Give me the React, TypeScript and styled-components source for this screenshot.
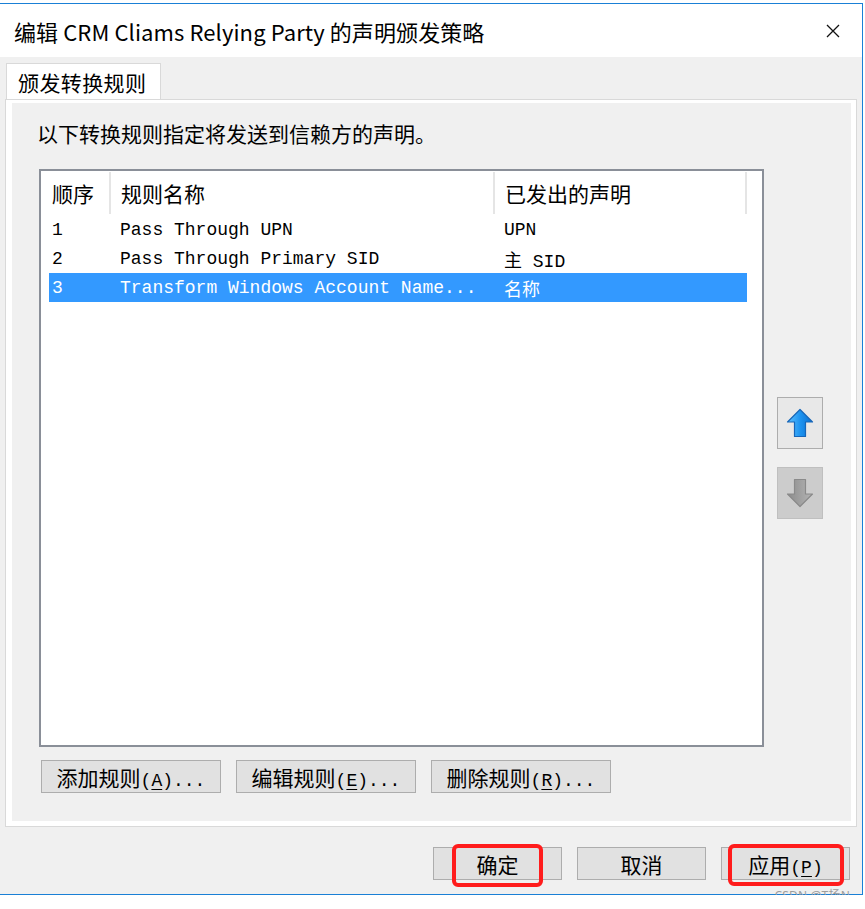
import React from 'react';
import styled, { createGlobalStyle } from 'styled-components';

const GlobalStyle = createGlobalStyle`
  html, body {
    margin: 0;
    padding: 0;
    background: #ffffff;
  }
  body {
    font-family: 'Noto Sans CJK SC', 'Noto Sans', sans-serif;
    color: #000;
  }
`;

const cjk = `'Noto Sans CJK SC', 'Noto Sans', sans-serif`;
const mono = `'Liberation Mono', 'Noto Sans CJK SC', monospace`;

// rules shown in the list
const rules = [
  { order: '1', name: 'Pass Through UPN', claim: 'UPN' },
  { order: '2', name: 'Pass Through Primary SID', claim: '主 SID' },
  { order: '3', name: 'Transform Windows Account Name...', claim: '名称' },
];

const Frame = styled.div`
  position: relative;
  margin-top: 3px;
  width: 862px;
  border-top: 1px solid #1a80d6;
  border-right: 1px solid #1a80d6;
  border-bottom: 1px solid #1a80d6;
`;

const TitleBar = styled.div`
  height: 53px;
  background: #ffffff;
  display: flex;
  align-items: center;
  justify-content: space-between;
  padding: 0 22px 0 14px;
`;

const Title = styled.div`
  font-family: ${cjk};
  font-size: 22px;
  letter-spacing: 0.1px;
`;

const Body = styled.div`
  background: #f0f0f0;
  padding: 6px 5px 0 5px;
`;

const TabStrip = styled.div`
  display: flex;
  padding-left: 1px;
`;

const Tab = styled.div`
  width: 155px;
  height: 36px;
  box-sizing: border-box;
  border: 1px solid #d9d9d9;
  border-bottom: none;
  background: #ffffff;
  font-family: ${cjk};
  font-size: 21px;
  letter-spacing: 0.4px;
  display: flex;
  align-items: center;
  padding-left: 11px;
`;

const TabPanel = styled.div`
  border: 1px solid #d9d9d9;
  background: #ffffff;
  padding: 3px 5px 5px 6px;
`;

const PanelInner = styled.div`
  background: #f0f0f0;
  padding: 15px 0 28px 0;
`;

const Description = styled.div`
  font-family: ${cjk};
  font-size: 21px;
  line-height: 30px;
  padding-left: 25px;
`;

const ListArea = styled.div`
  display: flex;
  align-items: flex-start;
  margin: 21px 0 0 27px;
  gap: 13px;
`;

const ListBox = styled.div`
  width: 713px;
  height: 574px;
  border: 2px solid #8a8f98;
  background: #ffffff;
  padding-left: 8px;
`;

const Row = styled.div<{ selected?: boolean }>`
  display: grid;
  grid-template-columns: 60px 384px 254px;
  width: 698px;
  height: 29px;
  align-items: center;
  background: ${({ selected }) => (selected ? '#3399ff' : 'transparent')};
  color: ${({ selected }) => (selected ? '#ffffff' : '#000000')};
  font-family: ${mono};
  font-size: 18px;
  white-space: nowrap;
`;

const HeaderRow = styled.div`
  display: grid;
  grid-template-columns: 60px 384px 254px;
  width: 700px;
  height: 44px;
  font-family: ${cjk};
  font-size: 21px;
`;

const HeaderCell = styled.div<{ first?: boolean; last?: boolean }>`
  display: flex;
  align-items: center;
  padding-left: ${({ first }) => (first ? '3px' : '10px')};
  margin: 1px 0;
  border-left: ${({ first }) => (first ? 'none' : '2px solid #e5e5e5')};
  border-right: ${({ last }) => (last ? '2px solid #e5e5e5' : 'none')};
`;

const Cell = styled.div<{ first?: boolean }>`
  padding-left: ${({ first }) => (first ? '3px' : '11px')};
  overflow: hidden;
`;

const OrderButtons = styled.div`
  display: flex;
  flex-direction: column;
  gap: 18px;
  margin-top: 228px;
`;

const OrderButton = styled.div<{ disabled?: boolean }>`
  width: 44px;
  height: 50px;
  border: 1px solid ${({ disabled }) => (disabled ? '#bfbfbf' : '#adadad')};
  background: ${({ disabled }) => (disabled ? '#cccccc' : '#e8e8e8')};
  display: flex;
  align-items: center;
  justify-content: center;
`;

const RuleButtons = styled.div`
  display: flex;
  gap: 15px;
  margin: 13px 0 0 29px;
`;

const Button = styled.div<{ width: number }>`
  position: relative;
  width: ${({ width }) => width}px;
  height: 33px;
  box-sizing: border-box;
  border: 1px solid #adadad;
  background: #e1e1e1;
  font-family: ${cjk};
  font-size: 21px;
  display: flex;
  align-items: center;
  justify-content: center;
  white-space: nowrap;
`;

const Mnemonic = styled.span`
  font-family: ${mono};
  font-size: 18px;
  u {
    text-underline-offset: 3px;
  }
`;

const Footer = styled.div`
  display: flex;
  justify-content: flex-end;
  gap: 15px;
  padding: 20px 7px 14px 0;
`;

const Highlight = styled.div<{ left: number; width: number; height: number }>`
  position: absolute;
  left: ${({ left }) => left}px;
  top: -4px;
  width: ${({ width }) => width}px;
  height: ${({ height }) => height}px;
  box-sizing: border-box;
  border: 4px solid #ff1c1c;
  border-radius: 6px;
`;

const Watermark = styled.div`
  position: absolute;
  right: 12px;
  bottom: -10px;
  font-family: 'Noto Sans', 'Noto Sans CJK SC', sans-serif;
  font-size: 12px;
  line-height: 16px;
  color: #9d9d9d;
  letter-spacing: 0.2px;
`;

const CloseIcon = () => (
  <svg width="14" height="14" viewBox="0 0 14 14">
    <path d="M1 1 L13 13 M13 1 L1 13" stroke="#111" strokeWidth="1.3" />
  </svg>
);

const ArrowIcon: React.FC<{ down?: boolean }> = ({ down }) => {
  const id = down ? 'gDown' : 'gUp';
  return (
    <svg width="28" height="30" viewBox="0 0 28 30" style={{ transform: down ? 'rotate(180deg)' : undefined }}>
      <defs>
        <linearGradient id={id} x1="0" y1="0" x2="1" y2="0">
          {down ? (
            <>
              <stop offset="0" stopColor="#b4b4b4" />
              <stop offset="1" stopColor="#8c8c8c" />
            </>
          ) : (
            <>
              <stop offset="0" stopColor="#62c3ff" />
              <stop offset="0.5" stopColor="#1e94f0" />
              <stop offset="1" stopColor="#0a6fd0" />
            </>
          )}
        </linearGradient>
      </defs>
      <path
        d="M14 1.5 L26.5 14 L19.5 14 L19.5 28.5 L8.5 28.5 L8.5 14 L1.5 14 Z"
        fill={`url(#${id})`}
        stroke={down ? '#8a8a8a' : '#1766b8'}
        strokeWidth="1.2"
        strokeLinejoin="round"
      />
    </svg>
  );
};

const ButtonLabel: React.FC<{ text: string; mnemonic?: string; dots?: boolean }> = ({ text, mnemonic, dots }) => (
  <span>
    {text}
    {mnemonic && (
      <Mnemonic>
        (<u>{mnemonic}</u>){dots ? '...' : ''}
      </Mnemonic>
    )}
  </span>
);

const App: React.FC = () => {
  return (
    <>
      <GlobalStyle />
      <Frame>
        <TitleBar>
          <Title>编辑 CRM Cliams Relying Party 的声明颁发策略</Title>
          <CloseIcon />
        </TitleBar>
        <Body>
          <TabStrip>
            <Tab>颁发转换规则</Tab>
          </TabStrip>
          <TabPanel>
            <PanelInner>
              <Description>以下转换规则指定将发送到信赖方的声明。</Description>
              <ListArea>
                <ListBox>
                  <HeaderRow>
                    <HeaderCell first>顺序</HeaderCell>
                    <HeaderCell>规则名称</HeaderCell>
                    <HeaderCell last>已发出的声明</HeaderCell>
                  </HeaderRow>
                  {rules.map((rule, index) => (
                    <Row key={rule.order} selected={index === 2}>
                      <Cell first>{rule.order}</Cell>
                      <Cell>{rule.name}</Cell>
                      <Cell>{rule.claim}</Cell>
                    </Row>
                  ))}
                </ListBox>
                <OrderButtons>
                  <OrderButton>
                    <ArrowIcon />
                  </OrderButton>
                  <OrderButton disabled>
                    <ArrowIcon down />
                  </OrderButton>
                </OrderButtons>
              </ListArea>
              <RuleButtons>
                <Button width={180}>
                  <ButtonLabel text="添加规则" mnemonic="A" dots />
                </Button>
                <Button width={180}>
                  <ButtonLabel text="编辑规则" mnemonic="E" dots />
                </Button>
                <Button width={180}>
                  <ButtonLabel text="删除规则" mnemonic="R" dots />
                </Button>
              </RuleButtons>
            </PanelInner>
          </TabPanel>
          <Footer>
            <Button width={129}>
              确定
              <Highlight left={18} width={91} height={43} />
            </Button>
            <Button width={129}>取消</Button>
            <Button width={129}>
              <ButtonLabel text="应用" mnemonic="P" />
              <Highlight left={6} width={116} height={42} />
            </Button>
          </Footer>
        </Body>
        <Watermark>CSDN @T扬N</Watermark>
      </Frame>
    </>
  );
};

export default App;
